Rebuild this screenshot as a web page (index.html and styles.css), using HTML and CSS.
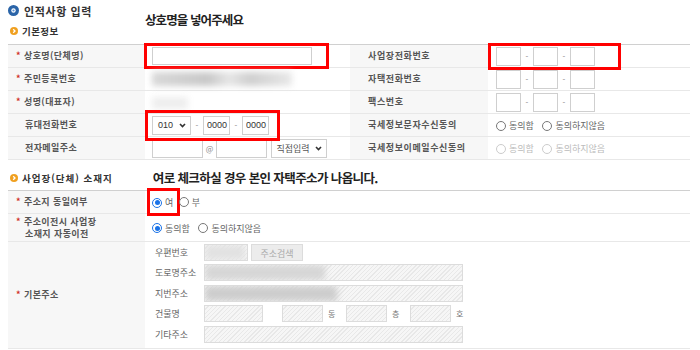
FILE: index.html
```html
<!DOCTYPE html>
<html lang="ko">
<head>
	<meta charset="utf-8" />
	<title>인적사항 입력</title>
	<link rel="stylesheet" href="styles.css">
</head>
<body>
	<div class="page">
		<div class="head">
			<div class="head-left">
				<h1 class="title">
					<svg width="11" height="11" viewBox="0 0 11 11"><circle cx="5.5" cy="5.5" r="5.5" fill="#2a64a8" /><circle cx="5.5" cy="5.5" r="2.2" fill="#fff" /><circle cx="5.5" cy="5.5" r="1.1" fill="#5b8fd0" /></svg>
					인적사항 입력
				</h1>
				<div class="sec-name">
					<svg width="8" height="8" viewBox="0 0 8 8"><circle cx="4" cy="4" r="4" fill="#f0a020" /><path d="M3.2 2.2 L5 4 L3.2 5.8" fill="none" stroke="#fff" stroke-width="1.3" /></svg>
					기본정보
				</div>
			</div>
			<div class="note">상호명을 넣어주세요</div>
		</div>

		<table class="form">
			<colgroup>
				<col class="c-label" />
				<col class="c-value" />
				<col class="c-label2" />
				<col />
			</colgroup>
			<tr>
				<th><span class="req">*</span>상호명(단체명)</th>
				<td>
					<span class="mark mark-name"><input class="inp w-name" type="text" /></span>
				</td>
				<th class="th2">사업장전화번호</th>
				<td class="td2">
					<span class="mark mark-tel">
						<input class="inp w-tel" type="text" /><span class="dash">-</span><input class="inp w-tel" type="text" /><span class="dash">-</span><input class="inp w-tel" type="text" />
					</span>
				</td>
			</tr>
			<tr>
				<th><span class="req">*</span>주민등록번호</th>
				<td><span class="blur blur-jumin"></span></td>
				<th class="th2">자택전화번호</th>
				<td class="td2">
					<input class="inp w-tel" type="text" /><span class="dash">-</span><input class="inp w-tel" type="text" /><span class="dash">-</span><input class="inp w-tel" type="text" />
				</td>
			</tr>
			<tr>
				<th><span class="req">*</span>성명(대표자)</th>
				<td><span class="blur blur-name"></span></td>
				<th class="th2">팩스번호</th>
				<td class="td2">
					<input class="inp w-tel" type="text" /><span class="dash">-</span><input class="inp w-tel" type="text" /><span class="dash">-</span><input class="inp w-tel" type="text" />
				</td>
			</tr>
			<tr>
				<th>휴대전화번호</th>
				<td>
					<span class="mark mark-hp">
						<span class="select w-hp">010<svg width="7" height="5" viewBox="0 0 7 5"><path d="M1 1 L3.5 3.6 L6 1" fill="none" stroke="#333" stroke-width="1.6" /></svg></span><span class="dash">-</span><input class="inp w-num" type="text" value="0000" /><span class="dash">-</span><input class="inp w-num" type="text" value="0000" />
					</span>
				</td>
				<th class="th2">국세정보문자수신동의</th>
				<td class="td2">
					<span class="radio"></span><span class="opt">동의함</span>
					<span class="radio"></span><span class="opt">동의하지않음</span>
				</td>
			</tr>
			<tr>
				<th>전자메일주소</th>
				<td>
					<input class="inp w-mail" type="text" /><span class="at">@</span><input class="inp w-mail" type="text" />
					<span class="select w-domain">직접입력<svg width="7" height="5" viewBox="0 0 7 5"><path d="M1 1 L3.5 3.6 L6 1" fill="none" stroke="#333" stroke-width="1.6" /></svg></span>
				</td>
				<th class="th2">국세정보이메일수신동의</th>
				<td class="td2 off">
					<span class="radio"></span><span class="opt">동의함</span>
					<span class="radio"></span><span class="opt">동의하지않음</span>
				</td>
			</tr>
		</table>

		<div class="head2">
			<div class="sec-name sec-name2">
				<svg width="8" height="8" viewBox="0 0 8 8"><circle cx="4" cy="4" r="4" fill="#f0a020" /><path d="M3.2 2.2 L5 4 L3.2 5.8" fill="none" stroke="#fff" stroke-width="1.3" /></svg>
				사업장(단체) 소재지
			</div>
			<div class="note">여로 체크하실 경우 본인 자택주소가 나옵니다.</div>
		</div>

		<table class="form">
			<colgroup>
				<col class="c-label" />
				<col />
			</colgroup>
			<tr>
				<th><span class="req">*</span>주소지 동일여부</th>
				<td>
					<span class="mark mark-same"><span class="radio on"></span><span class="opt">여</span></span>
					<span class="radio"></span><span class="opt">부</span>
				</td>
			</tr>
			<tr class="row-move">
				<th><span class="req">*</span>주소이전시 사업장<br />소재지 자동이전</th>
				<td>
					<span class="radio on"></span><span class="opt">동의함</span>
					<span class="radio"></span><span class="opt">동의하지않음</span>
				</td>
			</tr>
			<tr>
				<th><span class="req">*</span>기본주소</th>
				<td class="addr">
					<div class="addr-row">
						<span class="sub">우편번호</span>
						<span class="inp dis w-zip"><span class="blur blur-zip"></span></span>
						<span class="btn">주소검색</span>
					</div>
					<div class="addr-row">
						<span class="sub">도로명주소</span>
						<span class="inp dis w-long"><span class="blur blur-road"></span></span>
					</div>
					<div class="addr-row">
						<span class="sub">지번주소</span>
						<span class="inp dis w-long"><span class="blur blur-jibun"></span></span>
					</div>
					<div class="addr-row">
						<span class="sub">건물명</span>
						<span class="inp dis w-bld"></span>
						<span class="inp dis w-unit gap-bld"></span><span class="unit">동</span>
						<span class="inp dis w-unit"></span><span class="unit">층</span>
						<span class="inp dis w-unit"></span><span class="unit">호</span>
					</div>
					<div class="addr-row">
						<span class="sub">기타주소</span>
						<span class="inp dis w-long"></span>
					</div>
				</td>
			</tr>
		</table>
	</div>
</body>
</html>
```

FILE: styles.css
```css
* {
	margin: 0;
	padding: 0;
	box-sizing: border-box;
}

body {
	background: #fff;
	font-family: "Noto Sans CJK KR", "Noto Sans", sans-serif;
	color: #444;
}

.page {
	width: 700px;
	padding: 0 10px 0 8px;
}

/* 상단 제목 */
.head {
	display: flex;
	height: 44px;
}

.head-left {
	width: 137px;
}

.title {
	height: 20px;
	display: flex;
	align-items: center;
	gap: 5px;
	padding-top: 1px;
	font-size: 11px;
	font-weight: bold;
	letter-spacing: 0.6px;
	color: #333;
}

.sec-name {
	height: 22px;
	display: flex;
	align-items: center;
	gap: 4px;
	padding-left: 2px;
	font-size: 9.5px;
	font-weight: bold;
	letter-spacing: 0.4px;
	color: #333;
}

.note {
	padding-top: 12px;
	line-height: 16px;
	font-size: 12.5px;
	font-weight: bold;
	letter-spacing: -0.9px;
	color: #222;
}

.head2 {
	display: flex;
	height: 30px;
	padding-top: 10px;
}

.head2 .note {
	padding-top: 0;
	margin-left: 40px;
	letter-spacing: -0.6px;
}

.sec-name2 {
	height: 16px;
	letter-spacing: 1px;
}

/* 입력 표 */
.form {
	width: 682px;
	table-layout: fixed;
	border-collapse: collapse;
	border-top: 1px solid #d0d0d0;
}

.c-label {
	width: 137px;
}

.c-value {
	width: 205px;
}

.c-label2 {
	width: 138px;
}

.form th,
.form td {
	height: 23px;
	border-bottom: 1px solid #e8e8e8;
	font-size: 9px;
	vertical-align: middle;
	white-space: nowrap;
}

.form th {
	text-align: left;
	font-weight: bold;
	color: #555;
	background: #f7f7f7;
	padding-left: 17px;
	line-height: 12px;
	letter-spacing: 0.4px;
}

.form th.th2 {
	padding-left: 18px;
	letter-spacing: 0.6px;
}

.form td {
	padding-left: 7px;
	color: #666;
}

.form td.td2 {
	padding-left: 8px;
}

.req {
	display: inline-block;
	width: 8px;
	margin-left: -9px;
	color: #d0302a;
	font-size: 9px;
}

.row-move th,
.row-move td {
	height: 28px;
}

.inp {
	display: inline-block;
	height: 19px;
	border: 1px solid #cfcfcf;
	background: #fff;
	vertical-align: middle;
	font-family: "Liberation Sans", sans-serif;
	font-size: 9px;
	color: #333;
	padding-left: 3px;
	outline: none;
}

.w-name {
	width: 160px;
	height: 18px;
}

.w-tel {
	width: 25px;
}

.w-num {
	width: 27px;
}

.w-mail {
	width: 51px;
}

.dash,
.at {
	display: inline-block;
	width: 10px;
	text-align: center;
	vertical-align: middle;
	font-size: 8px;
	color: #888;
}

.dash {
	width: 12px;
}

.at {
	width: 13px;
}

.select {
	display: inline-flex;
	align-items: center;
	justify-content: space-between;
	height: 19px;
	padding: 0 4px 0 5px;
	border: 1px solid #cfcfcf;
	background: #fff;
	vertical-align: middle;
	font-family: "Liberation Sans", "Noto Sans CJK KR", sans-serif;
	font-size: 9px;
	color: #333;
}

.w-hp {
	width: 39px;
}

.w-domain {
	width: 56px;
	margin-left: 1px;
	color: #555;
}

.radio {
	display: inline-block;
	width: 10px;
	height: 10px;
	border: 1px solid #777;
	border-radius: 50%;
	vertical-align: middle;
	background: #fff;
	position: relative;
}

.radio.on {
	border-color: #1a73e8;
}

.radio.on:after {
	content: '';
	position: absolute;
	left: 1.5px;
	top: 1.5px;
	width: 5px;
	height: 5px;
	border-radius: 50%;
	background: #1a73e8;
}

.opt {
	display: inline-block;
	vertical-align: middle;
	margin: 0 6px 0 3px;
	font-size: 9px;
	color: #666;
}

.off .radio {
	border-color: #ccc;
}

.off .opt {
	color: #bbb;
}

/* 빨간 강조 테두리 */
.mark {
	position: relative;
	display: inline-block;
	vertical-align: middle;
}

.mark:after {
	content: '';
	position: absolute;
	border: 3px solid #f00;
}

.mark-name:after {
	left: -8px;
	right: -17px;
	top: -4px;
	bottom: -4px;
}

.mark-tel:after {
	left: -8px;
	right: -26px;
	top: -4px;
	bottom: -4px;
}

.mark-hp:after {
	left: -7px;
	right: -11px;
	top: -6px;
	bottom: -6px;
}

.mark-same:after {
	left: -5px;
	right: -4px;
	top: -7px;
	bottom: -7px;
}

.mark-same .opt {
	margin-right: 3px;
}

/* 흐림 처리 */
.blur {
	display: inline-block;
	vertical-align: middle;
	background: #cfcfcf;
	filter: blur(3px);
}

.blur-jumin {
	width: 140px;
	height: 14px;
	background: linear-gradient(to right, #d8d8d8, #c8c8c8 40%, #e6e6e6 55%, #cfcfcf 70%, #e8e8e8);
}

.blur-name {
	width: 36px;
	height: 12px;
	background: #eeeeee;
}

/* 기본주소 */
.form td.addr {
	padding: 0 0 3px 10px;
}

.addr-row {
	display: flex;
	align-items: center;
	height: 20.5px;
}

.sub {
	width: 49px;
	font-size: 9px;
	color: #666;
}

.inp.dis {
	height: 17px;
	border-color: #dcdcdc;
	padding: 0;
	overflow: hidden;
	background: repeating-linear-gradient(135deg, #f6f6f6 0 2px, #e8e8e8 2px 3px);
}

.w-zip {
	width: 44px;
}

.w-long {
	width: 259px;
}

.w-bld {
	width: 59px;
}

.w-unit {
	width: 41px;
}

.gap-bld {
	margin-left: 19px;
}

.unit {
	width: 23px;
	padding-left: 5px;
	font-size: 8px;
	color: #777;
}

.btn {
	margin-left: 3px;
	width: 52px;
	height: 17px;
	line-height: 17px;
	text-align: center;
	background: #ececec;
	border: 1px solid #dcdcdc;
	font-size: 9px;
	color: #aaa;
}

.blur-zip {
	width: 40px;
	height: 15px;
	background: #e2e2e2;
}

.blur-road {
	width: 120px;
	height: 15px;
	background: #d6d6d6;
}

.blur-jibun {
	width: 132px;
	height: 15px;
	background: #cdcdcd;
}
```
